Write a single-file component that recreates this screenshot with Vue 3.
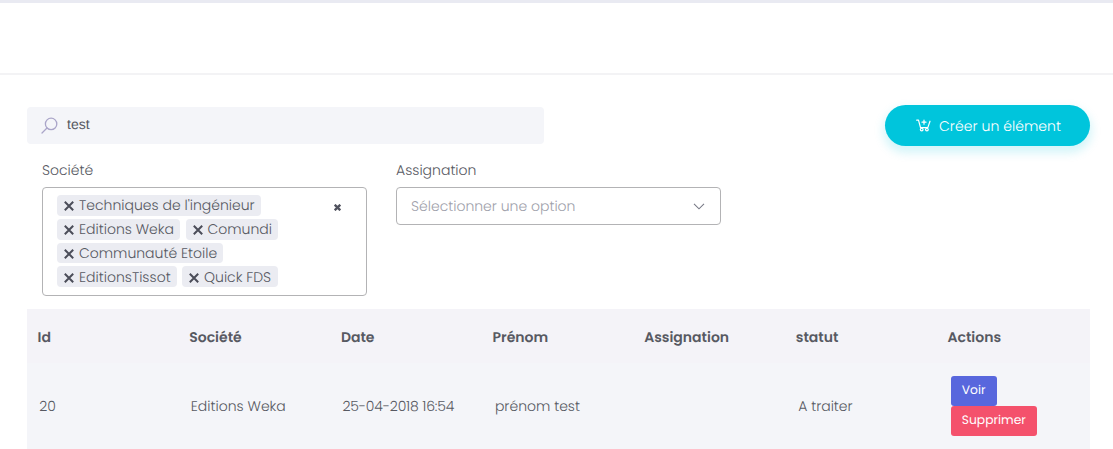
<script setup>
const tagRows = [
  [{ t: "Techniques de l'ingénieur", w: 203.5 }],
  [{ t: 'Editions Weka', w: 123 }, { t: 'Comundi', w: 92.5 }],
  [{ t: 'Communauté Etoile', w: 166 }],
  [{ t: 'EditionsTissot', w: 119.5 }, { t: 'Quick FDS', w: 95.5 }],
]
const heads = ['Id', 'Société', 'Date', 'Prénom', 'Assignation', 'statut', 'Actions']
const cells = [
  { key: 'id', text: '20' },
  { key: 'company', text: 'Editions Weka' },
  { key: 'date', text: '25-04-2018 16:54' },
  { key: 'name', text: 'prénom test' },
  { key: 'assigned', text: '' },
  { key: 'status', text: 'A traiter' },
]
</script>

<template>
  <div class="page">
    <header class="topbar"></header>
    <main>
      <div class="toolbar">
        <label class="search">
          <svg width="17" height="17" viewBox="0 0 17 17" fill="none" stroke="#aaa5c9" stroke-width="1.3" stroke-linecap="round"><circle cx="10.1" cy="6.9" r="5.7" /><path d="M6 11 1 16" /></svg>
          <span>test</span>
        </label>
        <button class="create">
          <svg width="15" height="13" viewBox="0 0 15 13" fill="none" stroke="#fff" stroke-width="1.2" stroke-linecap="round" stroke-linejoin="round"><path d="M.7 1.2h1.8l2 7.4h7.3L14 2.2M8 1.2v4M6 3.2h4" /><circle cx="5.7" cy="10.6" r="1.35" /><circle cx="10.9" cy="10.6" r="1.35" /></svg>
          <span>Créer un élément</span>
        </button>
      </div>
      <div class="filters">
        <div class="field">
          <div class="label">Société</div>
          <div class="box multi">
            <div class="tags">
              <div v-for="(row, i) in tagRows" :key="i" class="tagrow">
                <span v-for="tag in row" :key="tag.t" class="tag" :style="{ width: tag.w + 'px' }">
                  <svg width="10" height="10" viewBox="0 0 10 10" stroke="#4b4d59" stroke-width="2"><path d="M.8.8l8.4 8.4M9.2.8.8 9.2" /></svg>
                  <span>{{ tag.t }}</span>
                </span>
              </div>
            </div>
            <svg class="clear" width="7" height="7" viewBox="0 0 7 7" stroke="#50525e" stroke-width="2.3"><path d="M.7.7l5.6 5.6M6.3.7.7 6.3" /></svg>
          </div>
        </div>
        <div class="field">
          <div class="label">Assignation</div>
          <div class="box single">
            <span>Sélectionner une option</span>
            <svg width="12" height="7" viewBox="0 0 12 7" fill="none" stroke="#777985" stroke-width="1.1"><path d="M1 .9l5 4.9L11 .9" /></svg>
          </div>
        </div>
      </div>
      <div class="table">
        <div class="row head"><div v-for="h in heads" :key="h">{{ h }}</div></div>
        <div class="row body">
          <div v-for="c in cells" :key="c.key" :class="c.key">{{ c.text }}</div>
          <div class="actions">
            <button class="view">Voir</button>
            <button class="delete">Supprimer</button>
          </div>
        </div>
      </div>
    </main>
  </div>
</template>

<style>
body { overflow: hidden; background: #fff; }
</style>
<style scoped>
.page { height: 449px; overflow: hidden; box-sizing: border-box; font: 300 14px/20px Poppins, Inter, sans-serif; text-rendering: geometricPrecision; color: #575962; white-space: nowrap; }
.page * { box-sizing: border-box; }
.page svg { flex: none; display: block; }
button { border: 0; font: inherit; color: #fff; display: flex; align-items: center; text-rendering: inherit; }
.topbar { height: 75px; border-top: 3px solid #e9eaf2; border-bottom: 2px solid #f3f3f5; }
main { padding: 30px 23px 0 27px; }
.toolbar { display: flex; justify-content: space-between; align-items: flex-start; height: 56px; }
.search { margin-top: 2px; width: 516.5px; height: 37px; background: #f4f5f9; border-radius: 4px; display: flex; align-items: center; padding: 0 14px; gap: 9px; font-family: "Liberation Sans", sans-serif; font-weight: 400; color: #575962; }
.search span { margin-top: -3px; }
.create { width: 205px; height: 41px; border-radius: 21px; background: #00c5dc; padding: 0 0 0 31px; gap: 8px; box-shadow: 0 5px 10px 2px rgba(0, 197, 220, .17); }
.create span { letter-spacing: .05px; }
.filters { display: flex; gap: 29.5px; padding-left: 15px; height: 148px; }
.field { width: 324.5px; }
.label { height: 26px; line-height: 19px; }
.box { border: 1px solid #b3b3b5; border-radius: 4px; display: flex; }
.multi { height: 108.5px; padding: 7px 25px 0 14px; justify-content: space-between; }
.clear { margin-top: 9px; }
.tags { display: flex; flex-direction: column; gap: 3px; }
.tagrow { display: flex; gap: 5.5px; height: 20.75px; }
.tag { background: #ebecf2; border-radius: 4px; display: flex; align-items: center; gap: 5px; padding-left: 7px; }
.tag > svg { margin-top: 2px; }
.single { height: 38px; padding: 0 15px 0 14px; align-items: center; justify-content: space-between; color: #a0a1ab; }
.row { display: grid; grid-template-columns: repeat(7, 151.65px); width: 1063px; }
.head { height: 54px; background: #f4f3f8; align-items: center; font-weight: 600; color: #575962; }
.head > div { padding: 1px 0 0 10.6px; }
.body { height: 86px; background: #f4f5f9; align-items: center; box-shadow: 0 1px 0 #f4f5f9; }
.body > div { padding-left: 12.2px; }
.body .date { letter-spacing: -.17px; }
.body .name, .body .status { padding-left: 13px; }
.body .actions { padding-left: 14px; padding-bottom: .5px; }
.actions button { height: 30.2px; padding: 0 11px; border-radius: 3px; font-size: 12.25px; font-weight: 400; }
.view { width: 46px; background: #5867dd; }
.delete { width: 86px; background: #f4516c; }
</style>
